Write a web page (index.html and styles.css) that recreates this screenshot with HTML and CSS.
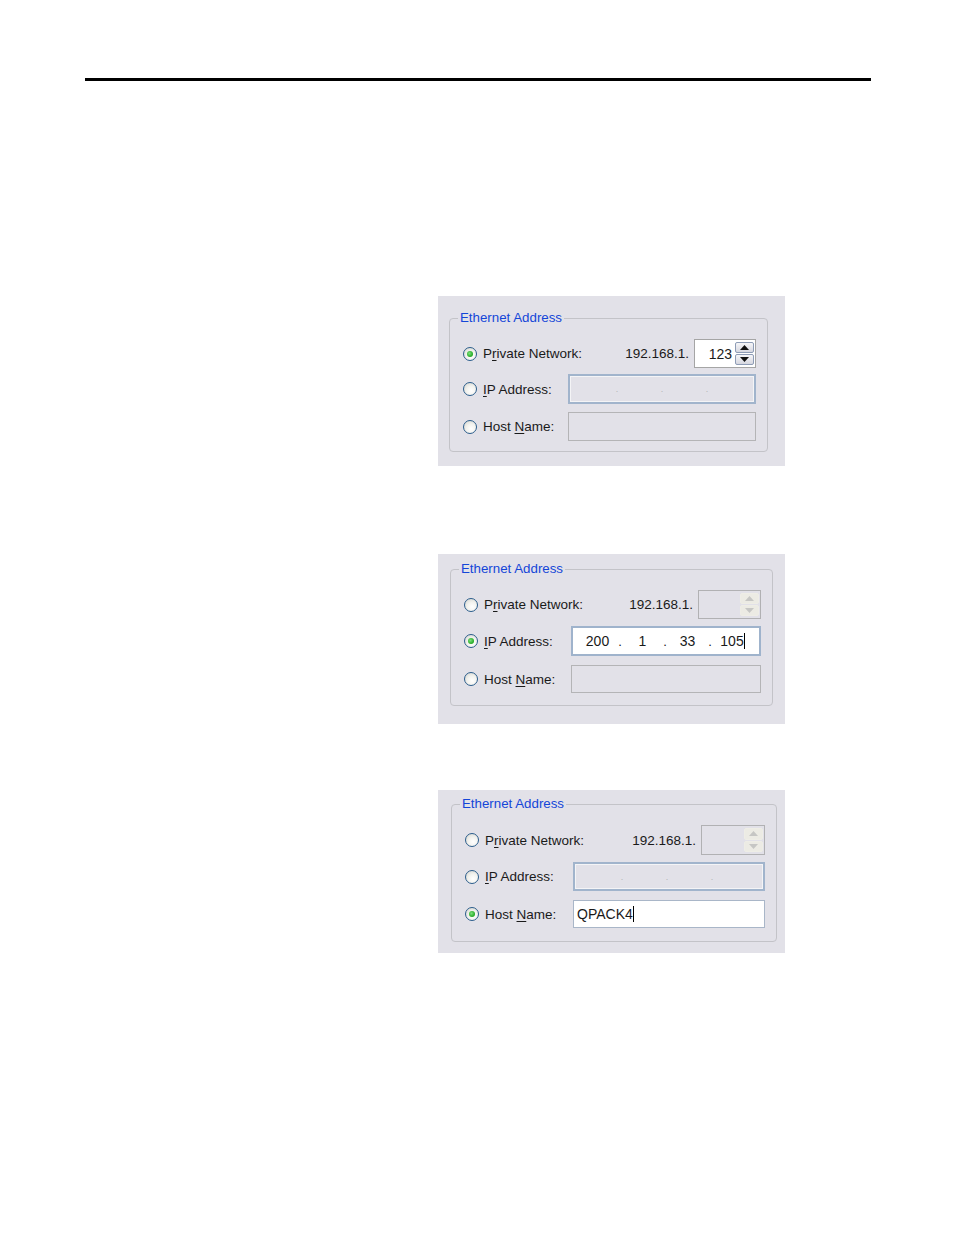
FILE: index.html
```html
<!DOCTYPE html>
<html lang="en">
<head>
    <meta charset="UTF-8">
    <meta name="viewport" content="width=device-width, initial-scale=1.0">
    <title>Ethernet Address</title>
    <link rel="stylesheet" href="styles.css">
</head>
<body>
    <div class="page">
        <div class="rule"></div>

        <!-- private network selected -->
        <div class="shot shot-a">
            <fieldset class="group">
                <legend>Ethernet Address</legend>
                <div class="group-body">
                    <div class="row row-1">
                        <label class="radio"><span class="dot on"></span><span>P<u>r</u>ivate Network:</span></label>
                        <span class="prefix">192.168.1.</span>
                        <div class="spin">
                            <span class="spin-value">123</span>
                            <span class="spin-btns">
                                <span class="spin-btn"><svg viewBox="0 0 9 5" width="9" height="5"><path d="M0 5 L4.5 0 L9 5 Z"/></svg></span>
                                <span class="spin-btn"><svg viewBox="0 0 9 5" width="9" height="5"><path d="M0 0 L4.5 5 L9 0 Z"/></svg></span>
                            </span>
                        </div>
                    </div>
                    <div class="row row-2">
                        <label class="radio"><span class="dot"></span><span><u>I</u>P Address:</span></label>
                        <div class="field ip disabled">
                            <span class="seg"></span><span class="sep">.</span><span class="seg"></span><span class="sep">.</span><span class="seg"></span><span class="sep">.</span><span class="seg"></span>
                        </div>
                    </div>
                    <div class="row row-3">
                        <label class="radio"><span class="dot"></span><span>Host <u>N</u>ame:</span></label>
                        <div class="field host disabled"></div>
                    </div>
                </div>
            </fieldset>
        </div>

        <!-- ip address selected -->
        <div class="shot shot-b">
            <fieldset class="group">
                <legend>Ethernet Address</legend>
                <div class="group-body">
                    <div class="row row-1">
                        <label class="radio"><span class="dot"></span><span>P<u>r</u>ivate Network:</span></label>
                        <span class="prefix">192.168.1.</span>
                        <div class="spin disabled">
                            <span class="spin-value"></span>
                            <span class="spin-btns">
                                <span class="spin-btn"><svg viewBox="0 0 9 5" width="9" height="5"><path d="M0 5 L4.5 0 L9 5 Z"/></svg></span>
                                <span class="spin-btn"><svg viewBox="0 0 9 5" width="9" height="5"><path d="M0 0 L4.5 5 L9 0 Z"/></svg></span>
                            </span>
                        </div>
                    </div>
                    <div class="row row-2">
                        <label class="radio"><span class="dot on"></span><span><u>I</u>P Address:</span></label>
                        <div class="field ip active">
                            <span class="seg">200</span><span class="sep">.</span><span class="seg">1</span><span class="sep">.</span><span class="seg">33</span><span class="sep">.</span><span class="seg">105<span class="caret"></span></span>
                        </div>
                    </div>
                    <div class="row row-3">
                        <label class="radio"><span class="dot"></span><span>Host <u>N</u>ame:</span></label>
                        <div class="field host disabled"></div>
                    </div>
                </div>
            </fieldset>
        </div>

        <!-- host name selected -->
        <div class="shot shot-c">
            <fieldset class="group">
                <legend>Ethernet Address</legend>
                <div class="group-body">
                    <div class="row row-1">
                        <label class="radio"><span class="dot"></span><span>P<u>r</u>ivate Network:</span></label>
                        <span class="prefix">192.168.1.</span>
                        <div class="spin disabled">
                            <span class="spin-value"></span>
                            <span class="spin-btns">
                                <span class="spin-btn"><svg viewBox="0 0 9 5" width="9" height="5"><path d="M0 5 L4.5 0 L9 5 Z"/></svg></span>
                                <span class="spin-btn"><svg viewBox="0 0 9 5" width="9" height="5"><path d="M0 0 L4.5 5 L9 0 Z"/></svg></span>
                            </span>
                        </div>
                    </div>
                    <div class="row row-2">
                        <label class="radio"><span class="dot"></span><span><u>I</u>P Address:</span></label>
                        <div class="field ip disabled">
                            <span class="seg"></span><span class="sep">.</span><span class="seg"></span><span class="sep">.</span><span class="seg"></span><span class="sep">.</span><span class="seg"></span>
                        </div>
                    </div>
                    <div class="row row-3">
                        <label class="radio"><span class="dot on"></span><span>Host <u>N</u>ame:</span></label>
                        <div class="field host active"><span class="text">QPACK4</span><span class="caret"></span></div>
                    </div>
                </div>
            </fieldset>
        </div>
    </div>
</body>
</html>
```

FILE: styles.css
```css
body {
    margin: 0;
    background-color: #fff;
    font-family: "Liberation Sans", Arial, sans-serif;
    color: #1a1a1a;
}
.page {
    width: 954px;
    height: 1235px;
    padding-top: 78px;
    box-sizing: border-box;
}
.rule {
    margin-left: 85px;
    width: 786px;
    height: 3px;
    background-color: #000;
}

/* screenshot panels */
.shot {
    margin-left: 438px;
    width: 347px;
    box-sizing: border-box;
    background-color: #e2e1e8;
    font-size: 13.5px;
}
.shot-a {
    margin-top: 215px;
    height: 170px;
    padding: 14px 0 0 11px;
    --group-w: 319px;
    --field-w: 188px;
    --spin-w: 62px;
    --h1: 29px; --h2: 30px; --h3: 29px;
    --g1: 6px; --g2: 8px;
    --pad-b: 10px;
}
.shot-b {
    margin-top: 88px;
    height: 170px;
    padding: 7px 0 0 12px;
    --group-w: 323px;
    --field-w: 190px;
    --spin-w: 63px;
    --h1: 29px; --h2: 30px; --h3: 28px;
    --g1: 7px; --g2: 9px;
    --pad-b: 12px;
}
.shot-c {
    margin-top: 66px;
    height: 163px;
    padding: 6px 0 0 13px;
    --group-w: 326px;
    --field-w: 192px;
    --spin-w: 64px;
    --h1: 30px; --h2: 29px; --h3: 28px;
    --g1: 7px; --g2: 9px;
    --pad-b: 13px;
}

.group {
    margin: 0;
    padding: 0;
    width: var(--group-w);
    box-sizing: border-box;
    border: 1px solid #c3c3c8;
    border-radius: 4px;
    min-inline-size: 0;
}
.group legend {
    margin-left: 8px;
    padding: 0 2px;
    line-height: 16px;
    color: #1446d8;
    font-size: 13.3px;
}
.group-body {
    padding: 13px 11px var(--pad-b) 13px;
}

.row {
    display: flex;
    align-items: center;
}
.row-1 { height: var(--h1); }
.row-2 { height: var(--h2); margin-top: var(--g1); }
.row-3 { height: var(--h3); margin-top: var(--g2); }
.row u {
    text-decoration-thickness: 1px;
    text-underline-offset: 2px;
}

.radio {
    display: flex;
    align-items: center;
    gap: 6px;
    white-space: nowrap;
}
.dot {
    width: 14px;
    height: 14px;
    box-sizing: border-box;
    border: 1px solid #2b5d8c;
    border-radius: 50%;
    background: radial-gradient(circle at 60% 65%, #ffffff 0, #f2f2ee 45%, #d0d0ca 100%);
    display: flex;
    align-items: center;
    justify-content: center;
}
.dot.on::after {
    content: "";
    width: 6px;
    height: 6px;
    border-radius: 50%;
    background: radial-gradient(circle at 40% 40%, #7be07b 0, #22a822 70%);
}

.prefix {
    margin-left: auto;
    margin-right: 5px;
}

/* spinner */
.spin {
    width: var(--spin-w);
    height: 100%;
    box-sizing: border-box;
    border: 1px solid #a5a5a5;
    background-color: #fff;
    display: flex;
    align-items: center;
    padding: 2px 1px 2px 2px;
}
.spin-value {
    flex: 1;
    text-align: right;
    padding-right: 3px;
    font-size: 14px;
}
.spin-btns {
    width: 19px;
    height: 100%;
    display: flex;
    flex-direction: column;
    gap: 1px;
}
.spin-btn {
    flex: 1;
    display: flex;
    align-items: center;
    justify-content: center;
    border: 1px solid #8e9cb6;
    border-radius: 2px;
    background: linear-gradient(#f6f6f8, #d6d7e0);
}
.spin-btn svg {
    fill: #111;
}
.spin.disabled {
    background-color: transparent;
    border-color: #b1b1b3;
}
.spin.disabled .spin-btn {
    border-color: #eeede6;
    background: #ecebe4;
}
.spin.disabled .spin-btn svg {
    fill: #c6c6c4;
}

/* edit fields */
.field {
    margin-left: auto;
    width: var(--field-w);
    height: 100%;
    box-sizing: border-box;
    display: flex;
    align-items: center;
    font-size: 14px;
}
.field.disabled {
    background-color: #e2e1e8;
}
.field.host.disabled {
    border: 1px solid #b4b4b6;
}
.field.ip.disabled {
    border: 2px solid #a1b4cc;
    box-shadow: inset 0 0 0 1px #f4f4f6;
}
.field.active {
    background-color: #fff;
    border: 2px solid #9fb3cc;
    box-shadow: inset 0 0 0 1px #ffffff;
}
.field.host.active {
    border-width: 1px;
    border-color: #a9b6c8;
    padding-left: 3px;
}
.field.ip {
    padding-left: 4px;
}
.seg {
    width: 41px;
    text-align: center;
}
.sep {
    width: 4px;
    text-align: center;
    font-size: 13px;
}
.field.disabled .sep {
    color: #b3b3b6;
    font-size: 9px;
}
.caret {
    display: inline-block;
    width: 1px;
    height: 16px;
    background-color: #000;
    vertical-align: -3px;
}
```
